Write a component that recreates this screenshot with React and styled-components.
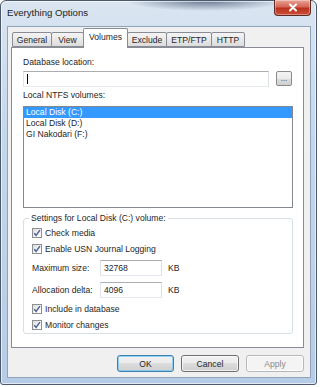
import React from 'react';
import styled, { createGlobalStyle } from 'styled-components';

const GlobalStyle = createGlobalStyle`
    body {
        margin: 0;
        background: #ffffff;
        font-family: "Liberation Sans", Arial, sans-serif;
    }
`;

const SWindow = styled.div`
    width: 317px;
    height: 385px;
    box-sizing: border-box;
    border: 1px solid #4b5a6c;
    border-radius: 6px 6px 3px 3px;
    background:
        radial-gradient(ellipse 80px 10px at 205px 0px, rgba(30, 50, 80, 0.6), rgba(30, 50, 80, 0)),
        linear-gradient(180deg, #dae5f1 0%, #c5d7eb 35%, #b6cce6 100%);
    box-shadow: inset 0 0 0 1px rgba(255, 255, 255, 0.6);
    display: flex;
    flex-direction: column;
    padding: 0 5px 6px 6px;
`;

const STitleBar = styled.div`
    height: 25px;
    display: flex;
    align-items: flex-start;
    justify-content: space-between;
`;

const STitle = styled.div`
    font-size: 9.6px;
    color: #1e1e1e;
    padding: 6px 0 0 0;
    line-height: 12px;
`;

const SClose = styled.div`
    width: 37px;
    height: 16px;
    margin-top: -1px;
    box-sizing: border-box;
    border: 1px solid #5e2a24;
    border-top: none;
    border-radius: 0 0 4px 4px;
    background: linear-gradient(180deg, #e8a497 0%, #d56656 45%, #b8331f 55%, #cf4e38 100%);
    display: flex;
    align-items: center;
    justify-content: center;
    box-shadow: inset 0 0 0 1px rgba(255, 255, 255, 0.35);
`;

const SClient = styled.div`
    flex: 1;
    background: #f0f0f0;
    border: 1px solid #8fa3ba;
    display: flex;
    flex-direction: column;
    color: #262626;
`;

const STabs = styled.div`
    display: flex;
    align-items: flex-end;
    height: 20px;
    padding-left: 4px;
`;

const STab = styled.div`
    width: ${props => props.w}px;
    height: ${props => (props.active ? 20 : 15)}px;
    margin-left: -1px;
    margin-bottom: ${props => (props.active ? -1 : 0)}px;
    box-sizing: border-box;
    border: 1px solid #898c95;
    border-bottom: ${props => (props.active ? 'none' : '1px solid #898c95')};
    border-radius: 2px 2px 0 0;
    background: ${props => (props.active ? '#ffffff' : 'linear-gradient(180deg, #f4f4f4 0%, #e9e9e9 50%, #dcdcdc 100%)')};
    position: relative;
    z-index: ${props => (props.active ? 2 : 1)};
    font-size: 8.6px;
    display: flex;
    justify-content: center;
    align-items: ${props => (props.active ? 'flex-start' : 'center')};
    padding-top: ${props => (props.active ? 3 : 0)}px;
    &:first-child { margin-left: 0; }
`;

const SPanel = styled.div`
    width: 293px;
    height: 301px;
    margin-left: 3px;
    box-sizing: border-box;
    border: 1px solid #898c95;
    background: #ffffff;
    padding: 9px 11px 0 11px;
    display: flex;
    flex-direction: column;
    position: relative;
    z-index: 1;
`;

const SLabel = styled.div`
    font-size: 8.6px;
    line-height: 11px;
    margin-top: ${props => props.mt || 0}px;
`;

const SPathRow = styled.div`
    display: flex;
    align-items: flex-start;
    gap: 7px;
    margin-top: 3px;
`;

const SInput = styled.div`
    width: ${props => props.w}px;
    height: 16px;
    box-sizing: border-box;
    border: 1px solid #abadb3;
    border-color: #abadb3 #dbdfe6 #e3e9ef #e2e3ea;
    background: #fff;
    font-size: 8.6px;
    display: flex;
    align-items: center;
    padding-left: 3px;
`;

const SCaret = styled.span`
    width: 1px;
    height: 10px;
    background: #000;
`;

const SBrowse = styled.div`
    width: 16px;
    height: 15px;
    box-sizing: border-box;
    border: 1px solid #8a8a8a;
    border-radius: 2px;
    background: linear-gradient(180deg, #f4f4f4 0%, #ebebeb 50%, #dcdcdc 51%, #d0d0d0 100%);
    font-size: 8px;
    color: #333;
    display: flex;
    justify-content: center;
    align-items: flex-end;
    padding-bottom: 2px;
    line-height: 8px;
`;

const SList = styled.div`
    width: 270px;
    height: 102px;
    box-sizing: border-box;
    border: 1px solid #828790;
    background: #fff;
    margin-top: 5px;
    display: flex;
    flex-direction: column;
`;

const SItem = styled.div`
    height: 11px;
    line-height: 11px;
    font-size: 8.6px;
    padding-left: 2px;
    color: ${props => (props.selected ? '#ffffff' : 'inherit')};
    background: ${props => (props.selected ? '#3399ff' : 'transparent')};
`;

const SGroup = styled.div`
    width: 270px;
    height: 116px;
    box-sizing: border-box;
    border: 1px solid #d5dfe5;
    border-radius: 3px;
    margin-top: 10px;
    padding: 6px 0 0 8px;
    position: relative;
    display: flex;
    flex-direction: column;
`;

const SLegend = styled.span`
    position: absolute;
    top: -6px;
    left: 5px;
    padding: 0 2px;
    background: #fff;
    font-size: 8.6px;
    line-height: 11px;
`;

const SCheckRow = styled.div`
    height: 16px;
    display: flex;
    align-items: center;
    gap: 3px;
    font-size: 8.6px;
`;

const SBox = styled.span`
    width: 10px;
    height: 10px;
    box-sizing: border-box;
    border: 1px solid #8e8f8f;
    background: linear-gradient(135deg, #dcdcdc 0%, #f4f4f4 60%, #ffffff 100%);
    display: flex;
    align-items: center;
    justify-content: center;
`;

const SFieldRow = styled.div`
    height: 20px;
    margin: 1px 0;
    display: flex;
    align-items: center;
    font-size: 8.6px;
`;

const SFieldLabel = styled.span`
    width: 68px;
`;

const SUnit = styled.span`
    margin-left: 6px;
`;

const SButtons = styled.div`
    width: 296px;
    display: flex;
    justify-content: flex-end;
    gap: 7px;
    margin-top: 7px;
`;

const SButton = styled.div`
    width: ${props => props.w || 58}px;
    height: 17px;
    box-sizing: border-box;
    border: 1px solid ${props => (props.primary ? '#3c7fb1' : props.disabled ? '#b5b9bc' : '#707070')};
    border-radius: 3px;
    background: ${props => (props.disabled
        ? '#f4f4f4'
        : 'linear-gradient(180deg, #f2f2f2 0%, #ebebeb 48%, #dddddd 50%, #cfcfcf 100%)')};
    box-shadow: inset 0 0 0 1px ${props => (props.primary ? 'rgba(120,200,240,0.8)' : 'rgba(255,255,255,0.7)')};
    font-size: 8.6px;
    color: ${props => (props.disabled ? '#8b8b8b' : 'inherit')};
    display: flex;
    align-items: center;
    justify-content: center;
`;

const Check = () => (
    <SBox>
        <svg width="8" height="8" viewBox="0 0 8 8">
            <path d="M1.2 4.2 L3.1 6.3 L6.9 1.2" fill="none" stroke="#4a5f97" strokeWidth="1.4" />
        </svg>
    </SBox>
);

const tabs = [
    { label: 'General', w: 40 },
    { label: 'View', w: 33 },
    { label: 'Volumes', w: 45, active: true },
    { label: 'Exclude', w: 40 },
    { label: 'ETP/FTP', w: 46 },
    { label: 'HTTP', w: 34 },
];

const volumes = ['Local Disk (C:)', 'Local Disk (D:)', 'GI Nakodari (F:)'];

const App = () => {
    return (
        <>
            <GlobalStyle />
            <SWindow>
                <STitleBar>
                    <STitle>Everything Options</STitle>
                    <SClose>
                        <svg width="10" height="9" viewBox="0 0 10 9">
                            <path d="M2 1.5 L8 7.5 M8 1.5 L2 7.5" stroke="#ffffff" strokeWidth="2" strokeLinecap="round" />
                        </svg>
                    </SClose>
                </STitleBar>
                <SClient>
                    <STabs>
                        {tabs.map((t, i) => (
                            <STab key={i} w={t.w} active={t.active}>{t.label}</STab>
                        ))}
                    </STabs>
                    <SPanel>
                        <SLabel>Database location:</SLabel>
                        <SPathRow>
                            <SInput w={246}><SCaret /></SInput>
                            <SBrowse>...</SBrowse>
                        </SPathRow>
                        <SLabel mt={3}>Local NTFS volumes:</SLabel>
                        <SList>
                            {volumes.map((v, i) => (
                                <SItem key={i} selected={i === 0}>{v}</SItem>
                            ))}
                        </SList>
                        <SGroup>
                            <SLegend>Settings for Local Disk (C:) volume:</SLegend>
                            <SCheckRow><Check />Check media</SCheckRow>
                            <SCheckRow><Check />Enable USN Journal Logging</SCheckRow>
                            <SFieldRow>
                                <SFieldLabel>Maximum size:</SFieldLabel>
                                <SInput w={62}>32768</SInput>
                                <SUnit>KB</SUnit>
                            </SFieldRow>
                            <SFieldRow>
                                <SFieldLabel>Allocation delta:</SFieldLabel>
                                <SInput w={62}>4096</SInput>
                                <SUnit>KB</SUnit>
                            </SFieldRow>
                            <SCheckRow><Check />Include in database</SCheckRow>
                            <SCheckRow><Check />Monitor changes</SCheckRow>
                        </SGroup>
                    </SPanel>
                    <SButtons>
                        <SButton primary w={57}>OK</SButton>
                        <SButton>Cancel</SButton>
                        <SButton disabled>Apply</SButton>
                    </SButtons>
                </SClient>
            </SWindow>
        </>
    );
};

export default App;
